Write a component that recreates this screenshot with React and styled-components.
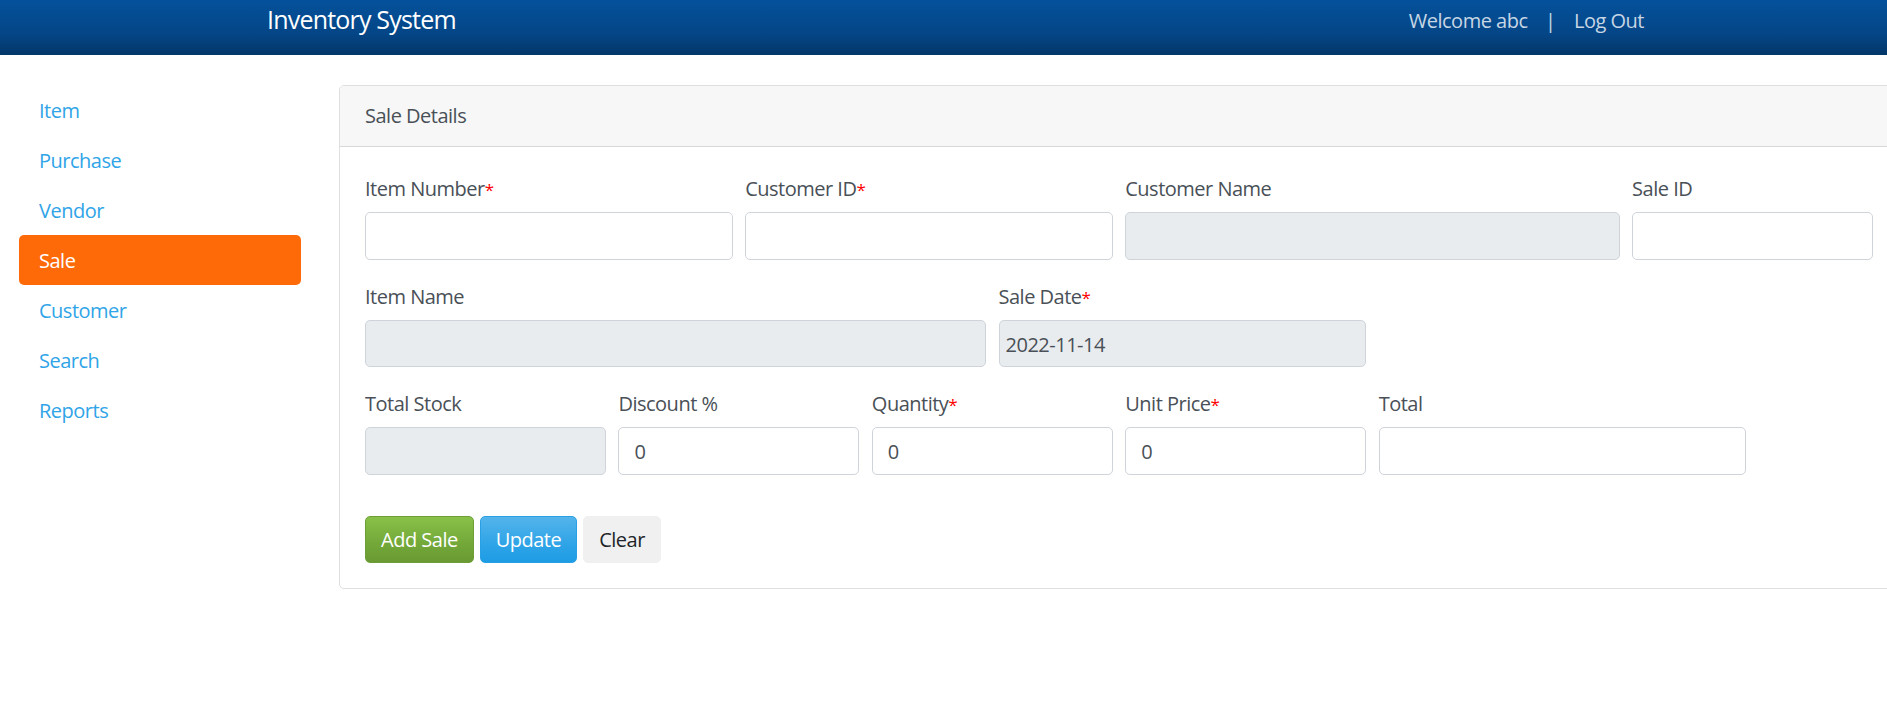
import React from "react";
import styled, { createGlobalStyle } from "styled-components";

const GlobalStyle = createGlobalStyle`
  html, body {
    margin: 0;
    padding: 0;
    background: #ffffff;
    overflow: hidden;
  }
  body {
    font-family: "Open Sans", "Noto Sans", sans-serif;
    font-size: 20px;
    letter-spacing: -0.5px;
    color: #495057;
  }
  * { box-sizing: border-box; }
`;

const Navbar = styled.header`
  height: 55px;
  background-image: linear-gradient(#04519b, #044687 60%, #033769);
`;

const NavInner = styled.div`
  margin-left: 267px;
  width: 1377px;
  display: flex;
  justify-content: space-between;
  align-items: flex-start;
`;

const Brand = styled.div`
  font-size: 25px;
  letter-spacing: -0.8px;
  line-height: 37.5px;
  color: #ffffff;
  padding-top: 1px;
`;

const UserNav = styled.div`
  display: flex;
  align-items: center;
  padding-top: 6px;
  line-height: 30px;
  font-size: 20px;
  color: rgba(255, 255, 255, 0.78);
`;

const Separator = styled.span`
  margin: 0 18.5px 0 17.5px;
`;

const Page = styled.div`
  display: flex;
  align-items: flex-start;
  margin-top: 30px;
  width: 1920px;
`;

const Sidebar = styled.nav`
  width: 282px;
  flex: none;
  margin-left: 19px;
  margin-right: 38px;
  display: flex;
  flex-direction: column;
`;

const PillLink = styled.a`
  display: block;
  padding: 11px 20px 9px;
  line-height: 30px;
  font-size: 20px;
  border-radius: 5px;
  text-decoration: none;
  color: ${(p) => (p.$active ? "#ffffff" : "#2fa4e7")};
  background: ${(p) => (p.$active ? "#ff6a08" : "transparent")};
`;

const Card = styled.section`
  width: 1560px;
  flex: none;
  border: 1px solid rgba(0, 0, 0, 0.125);
  border-radius: 5px;
  overflow: hidden;
`;

const CardHeader = styled.div`
  padding: 15px 25px;
  line-height: 30px;
  background: #f7f7f7;
  border-bottom: 1px solid rgba(0, 0, 0, 0.125);
  color: #495057;
`;

const CardBody = styled.div`
  padding: 25px;
`;

const FormRow = styled.div`
  display: grid;
  grid-template-columns: repeat(12, 1fr);
  column-gap: 12.5px;
`;

const Field = styled.div`
  grid-column: span ${(p) => p.$span};
  margin-bottom: 20px;
`;

const Label = styled.label`
  display: block;
  height: 32px;
  line-height: 30px;
  padding-top: 2px;
  margin-bottom: 8px;
  color: #495057;
`;

const Req = styled.span`
  color: #ff0000;
  font-size: 17px;
  line-height: 1;
`;

const Input = styled.input`
  display: block;
  width: 100%;
  height: 47.5px;
  padding: 8.5px ${(p) => (p.$tight ? "6px" : "15px")} 6.5px;
  font-family: inherit;
  font-size: 20px;
  letter-spacing: -0.5px;
  line-height: 30px;
  color: #495057;
  background: ${(p) => (p.$muted ? "#e9ecef" : "#ffffff")};
  border: 1px solid #ced4da;
  border-radius: 5px;
  outline: none;
`;

const ButtonRow = styled.div`
  display: flex;
  gap: 6px;
  padding-top: 21.5px;
`;

const variants = {
  success: {
    bg: "linear-gradient(#88c149, #73a839 60%, #699933)",
    border: "#6e9f37",
    color: "#ffffff",
  },
  primary: {
    bg: "linear-gradient(#54b4eb, #2fa4e7 60%, #1d9ce5)",
    border: "#2aa0e4",
    color: "#ffffff",
  },
  light: {
    bg: "#f0f0f0",
    border: "#f0f0f0",
    color: "#212529",
  },
};

const Button = styled.button`
  font-family: inherit;
  font-size: 20px;
  letter-spacing: -0.5px;
  line-height: 30px;
  height: 47px;
  padding: 8px 15px 7px;
  border-radius: 5px;
  border: 1px solid ${(p) => variants[p.$variant].border};
  background: ${(p) => variants[p.$variant].bg};
  color: ${(p) => variants[p.$variant].color};
  cursor: pointer;
`;

const navItems = ["Item", "Purchase", "Vendor", "Sale", "Customer", "Search", "Reports"];

function FormField({ span, label, required, value, muted, tight }) {
  return (
    <Field $span={span}>
      <Label>
        {label}
        {required && <Req>*</Req>}
      </Label>
      <Input
        type="text"
        defaultValue={value || ""}
        readOnly={muted}
        $muted={muted}
        $tight={tight}
      />
    </Field>
  );
}

export default function App() {
  return (
    <>
      <GlobalStyle />
      <Navbar>
        <NavInner>
          <Brand>Inventory System</Brand>
          <UserNav>
            <span>Welcome abc</span>
            <Separator>|</Separator>
            <span>Log Out</span>
          </UserNav>
        </NavInner>
      </Navbar>
      <Page>
        <Sidebar>
          {navItems.map((n) => (
            <PillLink key={n} href="#" $active={n === "Sale"}>
              {n}
            </PillLink>
          ))}
        </Sidebar>
        <Card>
          <CardHeader>Sale Details</CardHeader>
          <CardBody>
            <FormRow>
              <FormField span={3} label="Item Number" required />
              <FormField span={3} label="Customer ID" required />
              <FormField span={4} label="Customer Name" muted />
              <FormField span={2} label="Sale ID" />
            </FormRow>
            <FormRow>
              <FormField span={5} label="Item Name" muted />
              <FormField span={3} label="Sale Date" required muted tight value="2022-11-14" />
            </FormRow>
            <FormRow>
              <FormField span={2} label="Total Stock" muted />
              <FormField span={2} label="Discount %" value="0" />
              <FormField span={2} label="Quantity" required value="0" />
              <FormField span={2} label="Unit Price" required value="0" />
              <FormField span={3} label="Total" />
            </FormRow>
            <ButtonRow>
              <Button $variant="success">Add Sale</Button>
              <Button $variant="primary">Update</Button>
              <Button $variant="light">Clear</Button>
            </ButtonRow>
          </CardBody>
        </Card>
      </Page>
    </>
  );
}
